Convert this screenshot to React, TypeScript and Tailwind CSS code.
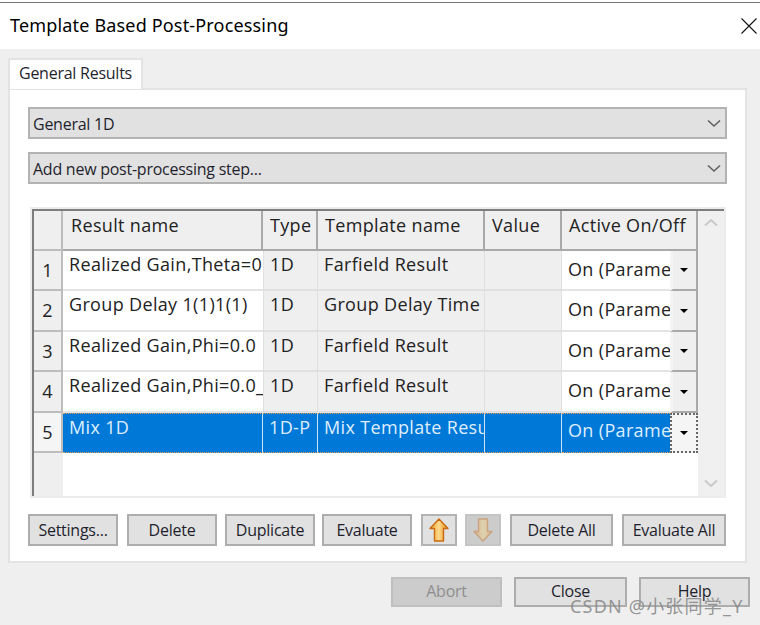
import React from "react";

const gridFont = "font-['Open_Sans','Noto_Sans',sans-serif] text-[18px] tracking-[0.34px] text-[#222]";
const winFont = "font-['Open_Sans','Noto_Sans',sans-serif] text-[16px] tracking-[-0.25px] text-[#1f1f2e]";

const rows = [
  { n: "1", name: "Realized Gain,Theta=0", type: "1D", tpl: "Farfield Result", h: "h-[40px]" },
  { n: "2", name: "Group Delay 1(1)1(1)", type: "1D", tpl: "Group Delay Time", h: "h-[41px]" },
  { n: "3", name: "Realized Gain,Phi=0.0", type: "1D", tpl: "Farfield Result", h: "h-[40px]" },
  { n: "4", name: "Realized Gain,Phi=0.0_", type: "1D", tpl: "Farfield Result", h: "h-[41px]" },
];

function Chevron() {
  return (
    <svg width="14" height="9" viewBox="0 0 14 9" fill="none" stroke="#606060" strokeWidth="1.6">
      <path d="M1 1.5 L7 7 L13 1.5" />
    </svg>
  );
}

function Combo({ label, className }: { label: string; className: string }) {
  return (
    <div className={`h-[32px] w-[699px] flex items-center justify-between pl-[3px] pr-[4px] bg-[#e1e1e1] border-2 border-[#b3b3b3] ${winFont} ${className}`}>
      <span className="pt-[1px]">{label}</span>
      <Chevron />
    </div>
  );
}

function Btn({ label, className, disabled }: { label: string; className: string; disabled?: boolean }) {
  return (
    <div
      className={`shrink-0 flex items-center justify-center border-2 ${
        disabled ? "bg-[#cccccc] border-[#bfbfbf] !text-[#8f8f8f]" : "bg-[#e1e1e1] border-[#adadad]"
      } ${winFont} ${className}`}
    >
      {label}
    </div>
  );
}

function Arrow({ down, faded }: { down?: boolean; faded?: boolean }) {
  return (
    <svg width="20" height="24" viewBox="0 0 20 24" className={`${down ? "rotate-180" : ""} ${faded ? "opacity-40" : ""}`}>
      <defs>
        <linearGradient id={down ? "ad" : "au"} x1="0" x2="1" y1="0" y2="0">
          <stop offset="0" stopColor="#f2a52c" />
          <stop offset="0.5" stopColor="#fbd98c" />
          <stop offset="1" stopColor="#e98a14" />
        </linearGradient>
      </defs>
      <path d="M10 1 L19 10.5 L14.5 10.5 L14.5 23 L5.5 23 L5.5 10.5 L1 10.5 Z" fill={`url(#${down ? "ad" : "au"})`} stroke="#c96a10" strokeWidth="1.4" strokeLinejoin="round" />
    </svg>
  );
}

function ArrowBtn({ down, className }: { down?: boolean; className: string }) {
  return (
    <div className={`shrink-0 w-[36px] h-[32px] flex items-center justify-center border-2 ${down ? "bg-[#cccccc] border-[#c4c4c4]" : "bg-[#e1e1e1] border-[#b3b3b3]"} ${className}`}>
      <Arrow down={down} faded={down} />
    </div>
  );
}

function Caret() {
  return <div className="w-0 h-0 border-l-[4px] border-r-[4px] border-t-[4px] border-l-transparent border-r-transparent border-t-black" />;
}

const clipCell = "overflow-hidden whitespace-nowrap";

function Row({ r }: { r: (typeof rows)[number] }) {
  return (
    <div className={`flex ${r.h} ${gridFont}`}>
      <div className="w-[29px] shrink-0 bg-[#efefef] border-r-2 border-b-2 border-[#bdbdbd] flex items-center justify-center">{r.n}</div>
      <div className={`w-[200px] shrink-0 bg-white pl-[6px] border-b-2 border-[#e4e4e4] ${clipCell}`}>{r.name}</div>
      <div className={`w-[55px] shrink-0 bg-[#efefef] pl-[6px] border-x border-b-2 border-[#e0e0e0] ${clipCell}`}>{r.type}</div>
      <div className={`w-[167px] shrink-0 bg-[#efefef] pl-[6px] border-r border-b-2 border-[#e0e0e0] ${clipCell}`}>{r.tpl}</div>
      <div className="w-[77px] shrink-0 bg-[#efefef] border-r border-b-2 border-[#e0e0e0]" />
      <div className={`w-[108px] shrink-0 bg-white pl-[6px] pt-[5px] border-b-2 border-[#e4e4e4] ${clipCell}`}>On (Parame</div>
      <div className="w-[28px] shrink-0 bg-[#efefef] border-l-[3px] border-l-[#f4f4f4] border-r-2 border-r-[#a9a9a9] border-b-2 border-b-[#a9a9a9] flex items-center justify-center pr-[2px]">
        <Caret />
      </div>
    </div>
  );
}

const selCell = "shrink-0 bg-[#0078d7] border-y border-dotted border-y-[#e9a050]";
const selSep = "[border-right-style:solid] border-r border-r-[#cfe2f2]";

export default function App() {
  return (
    <div className="w-[760px] h-[625px] relative overflow-hidden bg-[#efefef] flex flex-col">
      <div className="h-[3px] bg-white border-b border-[#777777] shrink-0" />
      <div className="h-[46px] shrink-0 bg-white flex items-center justify-between pl-[10px] pr-[3px] font-['Noto_Sans',sans-serif] text-[18px] text-black tracking-[0.17px]">
        <span className="pb-[2px]">Template Based Post-Processing</span>
        <svg width="16" height="16" viewBox="0 0 16 16" stroke="#111" strokeWidth="1.1">
          <path d="M0.5 0.5 L15.5 15.5 M15.5 0.5 L0.5 15.5" />
        </svg>
      </div>

      <div className="flex-1 flex flex-col">
        <div className="ml-[8px] mt-[9px] w-[135px] h-[31px] bg-white border-2 border-b-0 border-[#e3e3e3] flex items-center pl-[9px] pb-[3px] relative z-10 -mb-[1px]">
          <span className={winFont}>General Results</span>
        </div>
        <div className="ml-[8px] w-[739px] h-[475px] bg-white border-2 border-[#e3e3e3] pl-[18px] pt-[17px] flex flex-col">
          <Combo label="General 1D" className="" />
          <Combo label="Add new post-processing step..." className="mt-[13px]" />

          <div className="mt-[23px] ml-[2px] w-[696px] h-[291px] border-2 border-[#ececec] flex flex-col">
            <div className="flex-1 flex border-t-2 border-l-2 border-[#7d7d7d]">
              <div className="w-[664px] shrink-0 flex flex-col bg-white">
                <div className={`flex h-[40px] ${gridFont}`}>
                  <div className="w-[29px] shrink-0 bg-[#efefef] border-r-2 border-b-2 border-[#bdbdbd]" />
                  <div className="w-[200px] shrink-0 bg-[#efefef] border-r-2 border-b-2 border-[#a9a9a9] pl-[8px] pt-[1px]">Result name</div>
                  <div className="w-[55px] shrink-0 bg-[#efefef] border-r-2 border-b-2 border-[#a9a9a9] pl-[7px] pt-[1px] overflow-hidden">Type</div>
                  <div className="w-[167px] shrink-0 bg-[#efefef] border-r-2 border-b-2 border-[#a9a9a9] pl-[7px] pt-[1px]">Template name</div>
                  <div className="w-[77px] shrink-0 bg-[#efefef] border-r-2 border-b-2 border-[#a9a9a9] pl-[7px] pt-[1px]">Value</div>
                  <div className="w-[136px] shrink-0 bg-[#efefef] border-r-2 border-b-2 border-[#a9a9a9] pl-[7px] pt-[1px]">Active On/Off</div>
                </div>
                {rows.map((r) => (
                  <Row key={r.n} r={r} />
                ))}
                <div className={`flex h-[40px] ${gridFont} !text-[#dfeeff]`}>
                  <div className="w-[29px] shrink-0 bg-[#f5f5f5] border-r-2 border-b-2 border-[#bdbdbd] flex items-center justify-center text-[#222]">5</div>
                  <div className={`w-[200px] ${selCell} ${selSep} pl-[6px] ${clipCell}`}>Mix 1D</div>
                  <div className={`w-[55px] ${selCell} ${selSep} pl-[6px] ${clipCell}`}>1D-P</div>
                  <div className={`w-[167px] ${selCell} ${selSep} pl-[6px] ${clipCell}`}>Mix Template Resu</div>
                  <div className={`w-[77px] ${selCell} ${selSep}`} />
                  <div className={`w-[108px] ${selCell} pl-[6px] pt-[3px] ${clipCell}`}>On (Parame</div>
                  <div className="w-[28px] shrink-0 bg-[#f5f5f5] border-2 border-dotted border-[#666] flex items-center justify-center">
                    <Caret />
                  </div>
                </div>
                <div className="flex-1 flex">
                  <div className="w-[29px] shrink-0 bg-[#efefef]" />
                  <div className="flex-1 bg-white" />
                </div>
              </div>
              <div className="flex-1 bg-[#f0f0f0] flex flex-col items-center justify-between pt-[7px] pb-[8px]">
                <svg width="14" height="9" viewBox="0 0 14 9" fill="none" stroke="#c9c9c9" strokeWidth="2"><path d="M1 7.5 L7 2 L13 7.5" /></svg>
                <svg width="14" height="9" viewBox="0 0 14 9" fill="none" stroke="#c9c9c9" strokeWidth="2"><path d="M1 1.5 L7 7 L13 1.5" /></svg>
              </div>
            </div>
          </div>

          <div className="mt-[16px] flex h-[32px]">
            <Btn label="Settings..." className="w-[90px]" />
            <Btn label="Delete" className="ml-[9px] w-[90px]" />
            <Btn label="Duplicate" className="ml-[8px] w-[90px]" />
            <Btn label="Evaluate" className="ml-[7px] w-[90px]" />
            <ArrowBtn className="ml-[9px]" />
            <ArrowBtn down className="ml-[8px]" />
            <Btn label="Delete All" className="ml-[9px] w-[103px]" />
            <Btn label="Evaluate All" className="ml-[9px] w-[104px]" />
          </div>
        </div>

        <div className="mt-[14px] ml-[391px] flex h-[30px]">
          <Btn label="Abort" disabled className="w-[111px] pb-[2px]" />
          <Btn label="Close" className="ml-[12px] w-[113px] pb-[2px]" />
          <Btn label="Help" className="ml-[12px] w-[111px] pb-[2px]" />
        </div>
      </div>

      <div className="absolute left-[570px] top-[593px] font-['Noto_Sans','Noto_Sans_CJK_SC',sans-serif] text-[18px] text-[#8a8a8a]/90 tracking-[1.2px] whitespace-nowrap">
        CSDN @小张同学_Y
      </div>
    </div>
  );
}
